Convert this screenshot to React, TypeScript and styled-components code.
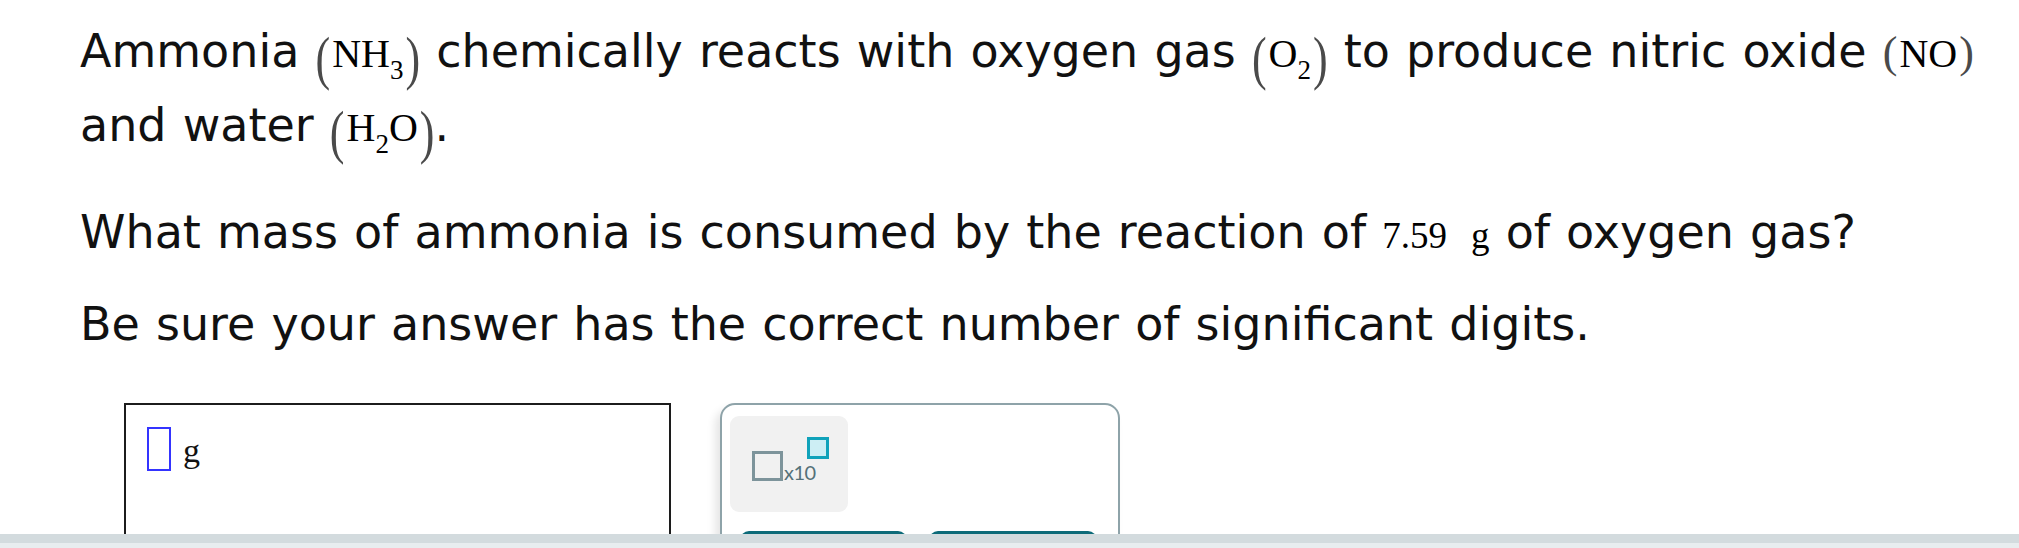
import React from "react";
import styled, { createGlobalStyle } from "styled-components";

const GlobalStyle = createGlobalStyle`
  html, body {
    margin: 0;
    padding: 0;
    background: #ffffff;
    overflow: hidden;
  }
`;

const Page = styled.div`
  width: 2019px;
  height: 548px;
  padding-left: 80px;
  box-sizing: border-box;
  overflow: hidden;
`;

const Question = styled.div`
  font-family: "DejaVu Sans", Verdana, sans-serif;
  font-size: 46px;
  color: #111111;
  word-spacing: 1.5px;
`;

const Para = styled.p<{ $mt: number }>`
  margin: ${(p) => p.$mt}px 0 0 0;
  line-height: 74px;
  white-space: nowrap;
`;

const Math = styled.span<{ $size?: number }>`
  font-family: "Liberation Serif", "Times New Roman", serif;
  font-size: ${(p) => p.$size ?? 37}px;
  line-height: 1;
  color: #000000;
  word-spacing: 0;
  white-space: nowrap;
`;

const Paren = styled.span<{ $tall?: boolean; $side: "l" | "r" }>`
  display: inline-block;
  font-family: "Liberation Serif", "Times New Roman", serif;
  font-size: 44px;
  line-height: 1;
  color: #4a4a4a;
  transform: ${(p) => (p.$tall ? "scaleY(1.36)" : "none")};
  transform-origin: 50% 6px;
  margin: ${(p) => (p.$side === "l" ? "0 2px 0 0" : "0 0 0 2px")};
`;

const Sub = styled.span`
  font-size: 27px;
  line-height: 1;
  vertical-align: -12px;
`;

const Unit = styled.span`
  margin-left: 24px;
`;

const AnswerRow = styled.div`
  display: flex;
  align-items: flex-start;
  margin-top: 42px;
  margin-left: 44px;
`;

const AnswerBox = styled.div`
  width: 547px;
  height: 170px;
  box-sizing: border-box;
  border: 2px solid #1c1c1c;
  display: flex;
  align-items: flex-start;
  padding: 22px 0 0 21px;
`;

const Cursor = styled.span`
  width: 24px;
  height: 44px;
  box-sizing: border-box;
  border: 2px solid #3434ff;
`;

const UnitLabel = styled.span`
  font-family: "Liberation Serif", "Times New Roman", serif;
  font-size: 34px;
  line-height: 34px;
  color: #111;
  margin: 7px 0 0 12px;
`;

const Panel = styled.div`
  width: 400px;
  height: 170px;
  margin-left: 49px;
  box-sizing: border-box;
  border: 2px solid #8ea3a9;
  border-radius: 15px;
  background: #ffffff;
  box-shadow: -5px 6px 9px rgba(0, 0, 0, 0.1);
  padding: 11px 0 0 8px;
`;

const SciButton = styled.div`
  width: 118px;
  height: 96px;
  box-sizing: border-box;
  background: #f1f1f1;
  border-radius: 9px;
  display: flex;
  align-items: flex-start;
  padding: 35px 0 0 22px;
`;

const BigBox = styled.span`
  width: 31px;
  height: 30px;
  box-sizing: border-box;
  border: 3px solid #7d949b;
  flex: none;
`;

const X10 = styled.span`
  font-family: Lato, "Open Sans", sans-serif;
  font-size: 20px;
  line-height: 20px;
  color: #557179;
  letter-spacing: -0.5px;
  margin: 11px 0 0 1px;
`;

const SupBox = styled.span`
  width: 22px;
  height: 22px;
  box-sizing: border-box;
  border: 3px solid #10a2ba;
  background: #cdeef4;
  margin: -14px 0 0 -9px;
  flex: none;
`;

const ButtonRow = styled.div`
  display: flex;
  gap: 22px;
  margin-top: 19px;
  padding-left: 10px;
`;

const ActionButton = styled.div<{ $w: number }>`
  width: ${(p) => p.$w}px;
  height: 50px;
  border-radius: 9px;
  background: #0d6b79;
`;

const Footer = styled.div`
  position: fixed;
  left: 0;
  right: 0;
  bottom: 0;
  height: 14px;
  background: linear-gradient(#d3dbde 0, #d3dbde 9px, #e8edef 9px, #e8edef 14px);
`;

const Chem: React.FC<{ children: React.ReactNode; tall?: boolean }> = ({ children, tall }) => (
  <Math $size={40}>
    <Paren $side="l" $tall={tall}>(</Paren>
    {children}
    <Paren $side="r" $tall={tall}>)</Paren>
  </Math>
);

export default function App() {
  return (
    <>
      <GlobalStyle />
      <Page>
        <Question>
          <Para $mt={14}>
            Ammonia{" "}
            <Chem tall>
              NH<Sub>3</Sub>
            </Chem>{" "}
            chemically reacts with oxygen gas{" "}
            <Chem tall>
              O<Sub>2</Sub>
            </Chem>{" "}
            to produce nitric oxide <Chem>NO</Chem>
            <br />
            and water{" "}
            <Chem tall>
              H<Sub>2</Sub>O
            </Chem>
            .
          </Para>
          <Para $mt={33}>
            What mass of ammonia is consumed by the reaction of{" "}
            <Math>
              7.59<Unit>g</Unit>
            </Math>{" "}
            of oxygen gas?
          </Para>
          <Para $mt={18}>Be sure your answer has the correct number of significant digits.</Para>
        </Question>
        <AnswerRow>
          <AnswerBox>
            <Cursor />
            <UnitLabel>g</UnitLabel>
          </AnswerBox>
          <Panel>
            <SciButton>
              <BigBox />
              <X10>x10</X10>
              <SupBox />
            </SciButton>
            <ButtonRow>
              <ActionButton $w={167} />
              <ActionButton $w={168} />
            </ButtonRow>
          </Panel>
        </AnswerRow>
      </Page>
      <Footer />
    </>
  );
}
